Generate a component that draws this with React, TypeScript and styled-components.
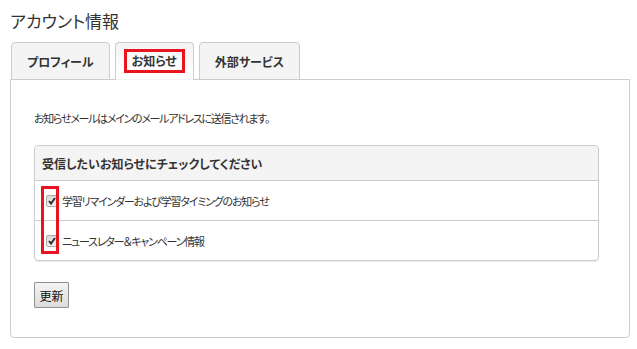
import React from "react";
import styled, { createGlobalStyle } from "styled-components";

const GlobalStyle = createGlobalStyle`
  html, body {
    margin: 0;
    padding: 0;
    background: #fff;
  }
  body {
    font-family: "Noto Sans CJK JP", "Noto Sans", sans-serif;
    font-feature-settings: "palt";
    color: #333;
  }
`;

const Page = styled.div`
  padding: 8px 8px 0 10px;
  width: 620px;
`;

const Title = styled.h1`
  margin: 0 0 8px 0;
  font-size: 17px;
  font-weight: normal;
  line-height: 26px;
  letter-spacing: 0;
  color: #333;
`;

const TabList = styled.div`
  display: flex;
  gap: 5px;
  padding-left: 1px;
  position: relative;
  z-index: 1;
`;

const Tab = styled.div<{ $active?: boolean }>`
  display: flex;
  align-items: center;
  height: 36px;
  padding: 0 15px;
  border: 1px solid #ccc;
  border-bottom-color: ${(p) => (p.$active ? "transparent" : "#ccc")};
  border-radius: 4px 4px 0 0;
  margin-bottom: -1px;
  background: ${(p) =>
    p.$active ? "linear-gradient(#f2f2f2, #fff 80%)" : "#f4f4f4"};
  font-size: 12px;
  font-weight: bold;
  color: #333;
`;

const Highlight = styled.span`
  border: 3px solid #e8141f;
  padding: 1px 5px;
  margin: 0 -7px;
  line-height: 16px;
`;

const Panel = styled.div`
  border: 1px solid #ccc;
  border-radius: 0 0 4px 4px;
  padding: 30px 30px 29px 23px;
`;

const Lead = styled.p`
  margin: 0 0 19px 0;
  font-size: 11px;
  letter-spacing: -1.3px;
  line-height: 16px;
`;

const ListGroup = styled.div`
  position: relative;
  border: 1px solid #ccc;
  border-radius: 4px;
  box-shadow: 0 1px 1px rgba(0, 0, 0, 0.08);
`;

const ListHeader = styled.div`
  height: 34px;
  display: flex;
  align-items: center;
  padding-left: 7px;
  background: #f4f4f4;
  border-bottom: 1px solid #ccc;
  border-radius: 4px 4px 0 0;
  font-size: 12px;
  font-weight: bold;
`;

const ListRow = styled.label<{ $last?: boolean }>`
  height: 39px;
  display: flex;
  align-items: center;
  gap: 4px;
  padding-left: 11px;
  border-bottom: ${(p) => (p.$last ? "none" : "1px solid #ccc")};
  font-size: 11px;
  letter-spacing: -1.2px;
`;

const Check = styled.span`
  width: 10px;
  height: 10px;
  border: 1px solid #a9a9a9;
  border-radius: 2px;
  background: linear-gradient(#d8d8d8, #f2f2f2);
  display: flex;
  align-items: center;
  justify-content: center;
`;

const CheckMark = () => (
  <svg width="10" height="10" viewBox="0 0 10 10">
    <path d="M2 5 L4 7.5 L8 2" fill="none" stroke="#333" strokeWidth="2" />
  </svg>
);

const Marker = styled.div`
  position: absolute;
  left: 6px;
  top: 40px;
  width: 12px;
  height: 62px;
  border: 3px solid #e8141f;
`;

const Button = styled.button`
  display: block;
  margin-top: 21px;
  width: 35px;
  height: 26px;
  padding: 0;
  border: 1px solid #8f8f8f;
  border-radius: 1px;
  background: linear-gradient(#f4f4f4, #dcdcdc);
  font-family: "Noto Sans CJK JP", sans-serif;
  font-size: 12px;
  color: #111;
`;

const items = [
  "学習リマインダーおよび学習タイミングのお知らせ",
  "ニュースレター＆キャンペーン情報",
];

export default function App() {
  return (
    <Page>
      <GlobalStyle />
      <Title>アカウント情報</Title>
      <TabList>
        <Tab>プロフィール</Tab>
        <Tab $active>
          <Highlight>お知らせ</Highlight>
        </Tab>
        <Tab>外部サービス</Tab>
      </TabList>
      <Panel>
        <Lead>お知らせメールはメインのメールアドレスに送信されます。</Lead>
        <ListGroup>
          <ListHeader>受信したいお知らせにチェックしてください</ListHeader>
          {items.map((label, i) => (
            <ListRow key={label} $last={i === items.length - 1}>
              <Check>
                <CheckMark />
              </Check>
              {label}
            </ListRow>
          ))}
          <Marker />
        </ListGroup>
        <Button>更新</Button>
      </Panel>
    </Page>
  );
}
